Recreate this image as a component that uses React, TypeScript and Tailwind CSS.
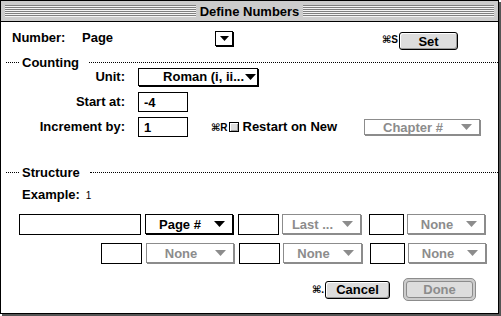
import React from 'react';

const stripes =
  'bg-[repeating-linear-gradient(to_bottom,#808080_0px,#808080_1px,#f4f4f4_1px,#f4f4f4_2px)]';

function Triangle({ disabled }: { disabled?: boolean }) {
  return (
    <svg width="11" height="6" viewBox="0 0 11 6" className="shrink-0">
      <polygon points="0,0 11,0 5.5,6" fill={disabled ? '#8c8c8c' : '#000'} />
    </svg>
  );
}

function Popup({
  label,
  w,
  h,
  disabled,
  labelClass = 'flex-1 text-center',
  arrowClass = 'mr-[7px]',
}: {
  label: string;
  w: string;
  h: string;
  disabled?: boolean;
  labelClass?: string;
  arrowClass?: string;
}) {
  return (
    <div
      className={`${w} ${h} shrink-0 bg-white flex items-center border ${
        disabled
          ? 'border-[#8c8c8c] text-[#8c8c8c] shadow-[1px_1px_0_#8c8c8c]'
          : 'border-black text-black shadow-[1px_1px_0_#000]'
      }`}
    >
      <span className={`${labelClass} whitespace-nowrap leading-none`}>{label}</span>
      <span className={arrowClass}>
        <Triangle disabled={disabled} />
      </span>
    </div>
  );
}

function Field({ w, h = 'h-[21px]', value }: { w: string; h?: string; value?: string }) {
  return (
    <div className={`${w} ${h} shrink-0 border border-black bg-white flex items-center pl-[5px] leading-none`}>
      {value}
    </div>
  );
}

function Button({ label, w }: { label: string; w: string }) {
  return (
    <div
      className={`${w} h-[18px] shrink-0 rounded-[3px] border border-black bg-[#dddddd] shadow-[inset_1px_1px_0_#fff,inset_-1px_-1px_0_#999] flex items-center justify-center leading-none`}
    >
      {label}
    </div>
  );
}

function SectionHeader({ title }: { title: string }) {
  return (
    <div className="flex items-center h-[10px]">
      <span className="ml-[5px] w-[13px] border-t border-dotted border-black" />
      <span className="ml-[3px] leading-none">{title}</span>
      <span className="ml-[10px] flex-1 border-t border-dotted border-black" />
    </div>
  );
}

export default function App() {
  return (
    <div className="w-[501px] h-[316px] bg-white font-['Liberation_Sans','DejaVu_Sans',sans-serif] text-[13px] font-bold text-black">
      <div className="w-[499px] h-[314px] border border-black shadow-[2px_2px_0_#555] flex flex-col">
        {/* Title bar */}
        <div className="h-[21px] shrink-0 bg-[#cccccc] border-b border-black flex items-center px-[4px]">
          <div className={`flex-1 h-[12px] ${stripes}`} />
          <span className="px-[4px] leading-none">Define Numbers</span>
          <div className={`flex-1 h-[12px] ${stripes}`} />
        </div>

        {/* Number row */}
        <div className="flex items-start h-[22px] mt-[7px]">
          <span className="ml-[11px] w-[70px] mt-[1px] leading-[16px]">Number:</span>
          <span className="w-[133px] mt-[1px] leading-[16px]">Page</span>
          <div className="mt-[2px] w-[18px] h-[15px] border border-black shadow-[1px_1px_0_#000] flex items-center justify-center">
            <svg width="9" height="5" viewBox="0 0 9 5">
              <polygon points="0,0 9,0 4.5,5" fill="#000" />
            </svg>
          </div>
          <span className="ml-auto mt-[3px] text-[10px] leading-[16px] mr-[1px]">⌘S</span>
          <div className="mt-[3px] mr-[40px]">
            <Button label="Set" w="w-[59px]" />
          </div>
        </div>

        {/* Counting */}
        <div className="mt-[6px]">
          <SectionHeader title="Counting" />
        </div>

        <div className="flex items-center h-[19px]">
          <span className="w-[124px] text-right">Unit:</span>
          <div className="ml-[13px]">
            <Popup
              label="Roman  (i, ii..."
              w="w-[120px]"
              h="h-[18px]"
              labelClass="flex-1 text-right pr-[1px]"
              arrowClass="mr-[1px]"
            />
          </div>
        </div>

        <div className="flex items-center h-[20px] mt-[6px]">
          <span className="w-[124px] text-right">Start at:</span>
          <div className="ml-[13px]">
            <Field w="w-[50px]" h="h-[20px]" value="-4" />
          </div>
        </div>

        <div className="flex items-center h-[20px] mt-[5px]">
          <span className="w-[124px] text-right">Increment by:</span>
          <div className="ml-[13px]">
            <Field w="w-[50px]" h="h-[20px]" value="1" />
          </div>
          <span className="ml-[23px] text-[10px]">⌘R</span>
          <span className="ml-[1px] w-[10px] h-[10px] border border-black bg-[#dddddd] shadow-[inset_1px_1px_0_#fff,inset_-1px_-1px_0_#999]" />
          <span className="ml-[4px]">Restart on New</span>
          <div className="ml-auto mr-[18px]">
            <Popup label="Chapter #" w="w-[116px]" h="h-[16px]" disabled />
          </div>
        </div>

        {/* Structure */}
        <div className="mt-[30px]">
          <SectionHeader title="Structure" />
        </div>

        <div className="flex items-center h-[16px] mt-[10px]">
          <span className="ml-[21px]">Example:</span>
          <span className="ml-[6px] text-[10px] font-normal">1</span>
        </div>

        <div className="flex items-start h-[22px] mt-[11px]">
          <div className="ml-[18px]">
            <Field w="w-[122px]" />
          </div>
          <div className="ml-[4px]">
            <Popup label="Page #" w="w-[88px]" h="h-[20px]" />
          </div>
          <div className="ml-[5px]">
            <Field w="w-[41px]" />
          </div>
          <div className="ml-[3px]">
            <Popup label="Last ..." w="w-[79px]" h="h-[20px]" disabled />
          </div>
          <div className="ml-[8px]">
            <Field w="w-[35px]" />
          </div>
          <div className="ml-[3px]">
            <Popup label="None" w="w-[78px]" h="h-[20px]" disabled />
          </div>
        </div>

        <div className="flex items-start h-[22px] mt-[7px]">
          <div className="ml-[100px]">
            <Field w="w-[41px]" />
          </div>
          <div className="ml-[4px]">
            <Popup label="None" w="w-[88px]" h="h-[20px]" disabled />
          </div>
          <div className="ml-[5px]">
            <Field w="w-[41px]" />
          </div>
          <div className="ml-[3px]">
            <Popup label="None" w="w-[79px]" h="h-[20px]" disabled />
          </div>
          <div className="ml-[8px]">
            <Field w="w-[35px]" />
          </div>
          <div className="ml-[3px]">
            <Popup label="None" w="w-[78px]" h="h-[20px]" disabled />
          </div>
        </div>

        {/* Buttons */}
        <div className="flex items-center h-[23px] mt-[13px]">
          <span className="ml-auto text-[10px] mr-[1px]">⌘.</span>
          <Button label="Cancel" w="w-[65px]" />
          <div className="ml-[13px] mr-[22px] w-[73px] h-[23px] rounded-[5px] border border-[#8c8c8c] bg-[#cccccc] p-[2px]">
            <div className="w-full h-full rounded-[3px] border border-[#8c8c8c] bg-[#dddddd] flex items-center justify-center text-[#8c8c8c] leading-none">
              Done
            </div>
          </div>
        </div>
      </div>
    </div>
  );
}
